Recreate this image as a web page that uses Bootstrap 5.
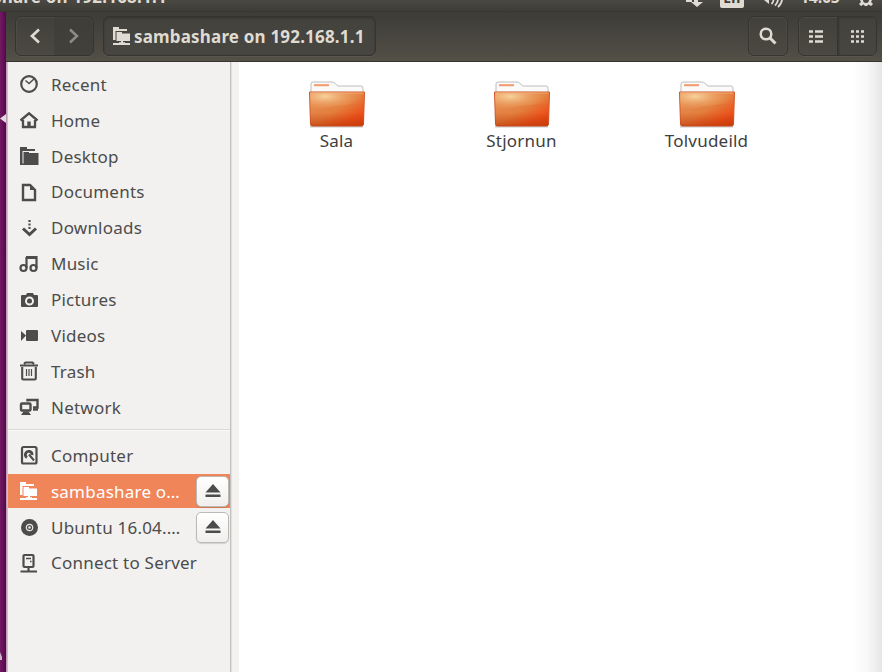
<!DOCTYPE html>
<html lang="en">
<head>
<meta charset="utf-8">
<title>sambashare on 192.168.1.1</title>
<link rel="stylesheet" href="https://cdn.jsdelivr.net/npm/bootstrap@5.3.0/dist/css/bootstrap.min.css">
<style>
body{width:882px;height:672px;font-family:"Noto Sans","Open Sans",sans-serif;font-size:17px;letter-spacing:.22px;line-height:1;color:#4c4c4c;background:#fff}
svg{display:block;flex:none}
.panel{height:12px;background:linear-gradient(#4a4842,#3d3c37);color:#dfdbd2;font-weight:700;border-bottom:1px solid #393832}
.panel-title{margin-left:-7px;margin-top:-12px;font-size:17px;line-height:17px;letter-spacing:.2px}
.clock{position:absolute;left:800px;top:-11px;font-size:16px;line-height:16px;letter-spacing:-.3px}
.lang{position:absolute;left:720px;top:-9px;width:24px;height:17px;background:#dfdbd2;color:#3d3c37;border-radius:2px;font-size:14px;line-height:13px;text-align:center}
.panel svg{position:absolute;top:0}
.launcher{width:6px;background:linear-gradient(90deg,#711a61,#5d0b50 80%,#4d0842)}
.launcher svg{position:absolute}
.win-edge{width:2px;background:linear-gradient(90deg,#b58bad,#d9d0d5)}
.bar{height:50px;margin-left:-2px;padding:4px 5px 0 9px;background:linear-gradient(#3d3c37,#504d45 90%,#545148);border-bottom:1px solid #36342f;color:#dfdbd2}
.tool{height:40px;border:1px solid #35342f;border-radius:6px;background:linear-gradient(#41403a,#4b4941);box-shadow:inset 0 0 0 1px #4d4b45,0 1px #59564d;overflow:hidden}
.tool.sunk{background:linear-gradient(#43423c,#474640);box-shadow:inset 0 1px 2px #35342f,0 1px #59564d}
.seg{width:38px;height:100%;display:flex;align-items:center;justify-content:center}
.seg.off{width:39px;background:#3e3d38aa;color:#8f8c84}
.seg.on{width:39px;background:linear-gradient(#43423c,#474640);border-left:1px solid #35342f;box-shadow:inset 1px 1px 2px #38372f}
.crumb{margin-left:9px;width:273px;padding-left:8px}
.crumb svg{margin-right:4px}
.views{margin-left:10px}
.path-label{font-weight:700;font-size:17px;letter-spacing:.18px;white-space:nowrap}
.side{width:223px;background:#f2f1ef;border-right:1px solid #c3c0bd;padding-top:4.3px}
.gutter{width:8px;background:#f3f2f1;border-left:1px solid #e2e0de}
.place{height:35.9px;padding-left:11px;white-space:nowrap}
.place svg{margin-right:12px}
.place.sel{height:34px;margin:1px 0;background:#f0855a;color:#fff}
.rule{height:2px;border-top:1px solid #dcdad7;background:#faf9f8;margin:4px 0 6px}
.eject{width:33px;height:31px;border:1px solid #bcb9b5;border-radius:5px;background:linear-gradient(#fff,#f0efed);color:#4c4c4c;padding:0;margin-right:1px;box-shadow:0 1px 1px #0002}
.eject svg{margin:0 auto}
.files{padding:18px 0 0 5px}
.files:after{content:"";position:absolute;right:0;top:0;bottom:0;width:30px;background:linear-gradient(90deg,#fff0,#f8f8f8 50%,#e6e6e6)}
.file{width:185px}
.file svg{margin-bottom:4px}
.file span{color:#3e3e3e;line-height:18px}
</style>
</head>
<body class="d-flex flex-column overflow-hidden">
<svg width="0" height="0" class="position-absolute">
<defs>
<linearGradient id="of" x1="0" y1="0" x2="1" y2="1"><stop offset="0" stop-color="#e88c55"/><stop offset=".5" stop-color="#e2803f"/><stop offset=".8" stop-color="#ec4f19"/><stop offset="1" stop-color="#d9430f"/></linearGradient>
<radialGradient id="gl" cx=".28" cy=".2" r=".7"><stop offset="0" stop-color="#f7d7a0" stop-opacity=".95"/><stop offset="1" stop-color="#f0a060" stop-opacity=".05"/></radialGradient>
<linearGradient id="bt" x1="0" y1="0" x2="0" y2="1"><stop offset=".6" stop-color="#c33806" stop-opacity="0"/><stop offset="1" stop-color="#b93607" stop-opacity=".6"/></linearGradient>
</defs>
<symbol id="folder" viewBox="0 0 58 48"><path d="M3 45V4q0-2 2-2h19q2 0 3 1.500l3 2.500h23q2 0 2 2v37z" fill="#fafafa" stroke="#bdbdbd"/><path d="M6 5.200h15" stroke="#f49a6a" stroke-width="2"/><path d="M2 46.500h53" stroke="#999" stroke-opacity=".55" stroke-width="2"/><path d="M1.500 12h55l-1 32q0 2-2 2h-49q-2 0-2-2z" fill="url(#of)" stroke="#d1582a"/><path d="M2 12.500h54l-.4 11Q30 24 2.500 32z" fill="url(#gl)"/><path d="M1.500 12h55l-1 32q0 2-2 2h-49q-2 0-2-2z" fill="url(#bt)"/><path d="M2.500 13h53" stroke="#f5b88a" stroke-opacity=".7"/></symbol>
<symbol id="share" viewBox="0 0 18 18"><path d="M1 0h6v2h8v2H3.500v9H1z" fill="currentColor"/><path d="M4.500 5H10v1.500h8V14H4.500z" fill="currentColor"/><path d="M10 14v3M1 17h17" stroke="currentColor" stroke-width="2"/><path d="M7 15.800h6" stroke="currentColor" stroke-width="1.200"/></symbol>
<symbol id="eject" viewBox="0 0 16 14"><path d="M8 0l7.500 8.500H.5zM.5 10.500h15V13H.5z" fill="currentColor"/></symbol>
</svg>
<div class="panel position-relative overflow-hidden flex-shrink-0">
  <div class="panel-title text-nowrap">share on 192.168.1.1</div>
  <svg style="left:685px" width="22" height="8"><path d="M1 0h6v2H1zM9 0h4v2h5l-6 5-6-5h3z" fill="#dfdbd2"/></svg>
  <div class="lang">En</div>
  <svg style="left:761px" width="24" height="8" fill="none" stroke="#dfdbd2" stroke-width="1.8"><path d="M1 0h7v4L3 0" fill="#dfdbd2" stroke="none"/><path d="M12.500 0q0 2-2 4M17 0q-.5 3-3 5.500M21 0q-.5 4-4 7"/></svg>
  <div class="clock">14:05</div>
  <svg style="left:857px" width="18" height="8"><path d="M3 0l1 2-2 2 2 2 2.500-1.500L8 6h2l1.500-1.500L14 6l2-2-2-2 1-2h-3q0 3-3 3T6 0z" fill="#dfdbd2"/></svg>
</div>
<div class="d-flex flex-grow-1">
  <aside class="launcher position-relative flex-shrink-0">
    <svg style="left:0;top:102px" width="6" height="10"><path d="M6 0v9L0 4.500z" fill="#ddd"/></svg>
    <svg style="left:0;top:639px" width="3" height="10"><path d="M0 1l2 5v3H0z" fill="#c9b5c5"/></svg>
  </aside>
  <div class="win-edge flex-shrink-0"></div>
  <div class="d-flex flex-column flex-grow-1">
    <header class="bar d-flex position-relative flex-shrink-0">
      <div class="tool d-flex">
        <div class="seg"><svg width="12" height="16" fill="none" stroke="currentColor" stroke-width="2.700"><path d="M10 1.500L3 8l7 6.500"/></svg></div>
        <div class="seg off"><svg width="12" height="16" fill="none" stroke="currentColor" stroke-width="2.500"><path d="M2 1.500l7 6.500-7 6.500"/></svg></div>
      </div>
      <div class="tool sunk d-flex align-items-center crumb"><svg width="18" height="18"><use href="#share"/></svg><span class="path-label">sambashare on 192.168.1.1</span></div>
      <div class="tool ms-auto"><div class="seg"><svg width="18" height="18" fill="none" stroke="currentColor"><circle cx="7" cy="7" r="5.300" stroke-width="2.500"/><path d="M11 11l5.500 5.500" stroke-width="3"/></svg></div></div>
      <div class="tool d-flex views"><div class="seg pe-1"><svg width="14" height="13" stroke="currentColor" stroke-width="2.500" stroke-dasharray="4 2 8"><path d="M0 1.500h14M0 6.500h14M0 11.500h14"/></svg></div><div class="seg on"><svg width="13" height="13" stroke="currentColor" stroke-width="2.500" stroke-dasharray="3 2"><path d="M0 1.500h13M0 6.500h13M0 11.500h13"/></svg></div></div>
    </header>
    <div class="d-flex flex-grow-1">
      <nav class="side flex-shrink-0">
        <div class="place d-flex align-items-center"><svg width="20" height="20" fill="none" stroke="currentColor"><circle cx="10" cy="10" r="7.800" stroke-width="2.200"/><path d="M6.500 6.500l3.500 3 5-4.500" stroke-width="1.500"/></svg><span>Recent</span></div>
        <div class="place d-flex align-items-center"><svg width="20" height="20" fill="none" stroke="currentColor" stroke-width="2.300"><path d="M1.500 10.500L10 3.300l8.500 7.200M4 10v7h12v-7"/><path d="M10 17v-5.500" stroke-width="3.400"/></svg><span>Home</span></div>
        <div class="place d-flex align-items-center"><svg width="20" height="20" fill="currentColor"><path d="M1 1h7v2h8v2H3.500v13H1z"/><path d="M4.500 6H10v1h9.500v12H1v-1.500h3.500z"/></svg><span>Desktop</span></div>
        <div class="place d-flex align-items-center"><svg width="20" height="20"><path d="M4 3h7l5 5v10H4z" fill="none" stroke="currentColor" stroke-width="2.400"/><path d="M11 3v5h5z" fill="currentColor"/></svg><span>Documents</span></div>
        <div class="place d-flex align-items-center"><svg width="20" height="20" fill="none" stroke="currentColor"><path d="M10.500 2v10" stroke-width="2.200" stroke-dasharray="2 1.500"/><path d="M4 10.500l6.500 6 6.500-6" stroke-width="3"/></svg><span>Downloads</span></div>
        <div class="place d-flex align-items-center"><svg width="20" height="20" fill="none" stroke="currentColor" stroke-width="2.200"><circle cx="4.500" cy="14" r="3"/><circle cx="14.500" cy="14" r="3"/><path d="M7.500 14V3M17.500 14V2"/><path d="M7 3.500h11" stroke-width="3"/></svg><span>Music</span></div>
        <div class="place d-flex align-items-center"><svg width="20" height="20"><path d="M3 5h4l1-2h6l1 2h3q1 0 1 1v10q0 1-1 1H3q-1 0-1-1V6q0-1 1-1z" fill="currentColor"/><circle cx="10.500" cy="11" r="3.500" fill="none" stroke="#f2f1ef" stroke-width="2"/></svg><span>Pictures</span></div>
        <div class="place d-flex align-items-center"><svg width="20" height="20" fill="currentColor"><path d="M2 6l5 4.500L2 16z"/><rect x="7" y="5" width="12" height="11" rx="1"/></svg><span>Videos</span></div>
        <div class="place d-flex align-items-center"><svg width="20" height="20" fill="none" stroke="currentColor" stroke-width="2.100"><path d="M1 4.500h18M5 3l1.500-1.500h7L15 3M3.200 6v11.500q0 1 1 1h11.600q1 0 1-1V6"/><path d="M7.500 8v7M10 8v7M12.500 8v7" stroke-width="1.200"/></svg><span>Trash</span></div>
        <div class="place d-flex align-items-center"><svg width="20" height="20" fill="none" stroke="currentColor" stroke-width="2.400"><path d="M8.500 4.500V3h10v7.500H14"/><path d="M14 12.500h5"/><rect x="2" y="6.500" width="9.500" height="7" rx="1"/><path d="M4.500 14.500h5l2.500 3.500H2z" fill="currentColor" stroke="none"/></svg><span>Network</span></div>
        <div class="rule"></div>
        <div class="place d-flex align-items-center"><svg width="20" height="20" fill="none" stroke="currentColor"><rect x="3" y="2" width="14.500" height="16.500" rx="1.500" stroke-width="2.200"/><path d="M8 12.500a3.300 3.300 0 1 1 5-2.500" stroke-width="2.800"/><path d="M10 9.500l5 6" stroke-width="2"/></svg><span>Computer</span></div>
        <div class="place sel d-flex align-items-center"><svg width="20" height="20" viewBox="0 -1 20 20"><use href="#share" width="18" height="18"/></svg><span>sambashare o…</span><button class="eject ms-auto"><svg width="16" height="14"><use href="#eject"/></svg></button></div>
        <div class="place d-flex align-items-center"><svg width="20" height="20"><circle cx="10.500" cy="10.500" r="8.500" fill="currentColor"/><circle cx="10.500" cy="10.500" r="3.200" fill="none" stroke="#e8e7e5" stroke-width="1.200"/><circle cx="10.500" cy="10.500" r="1.300" fill="#e8e7e5"/></svg><span>Ubuntu 16.04.…</span><button class="eject ms-auto"><svg width="16" height="14"><use href="#eject"/></svg></button></div>
        <div class="place d-flex align-items-center"><svg width="20" height="20" fill="none" stroke="currentColor" stroke-width="2.200"><rect x="4.500" y="2" width="10" height="12" rx="1"/><path d="M7 5.500h5M11 8.500h1.500" stroke-width="1.300"/><path d="M9.500 14v4M1.500 18.500h16.500"/></svg><span>Connect to Server</span></div>
      </nav>
      <div class="gutter flex-shrink-0"></div>
      <main class="files position-relative flex-grow-1 d-flex align-items-start">
        <div class="file d-flex flex-column align-items-center"><svg width="58" height="48"><use href="#folder"/></svg><span>Sala</span></div>
        <div class="file d-flex flex-column align-items-center"><svg width="58" height="48"><use href="#folder"/></svg><span>Stjornun</span></div>
        <div class="file d-flex flex-column align-items-center"><svg width="58" height="48"><use href="#folder"/></svg><span>Tolvudeild</span></div>
      </main>
    </div>
  </div>
</div>
<script src="https://cdn.jsdelivr.net/npm/bootstrap@5.3.0/dist/js/bootstrap.bundle.min.js"></script>
</body>
</html>
